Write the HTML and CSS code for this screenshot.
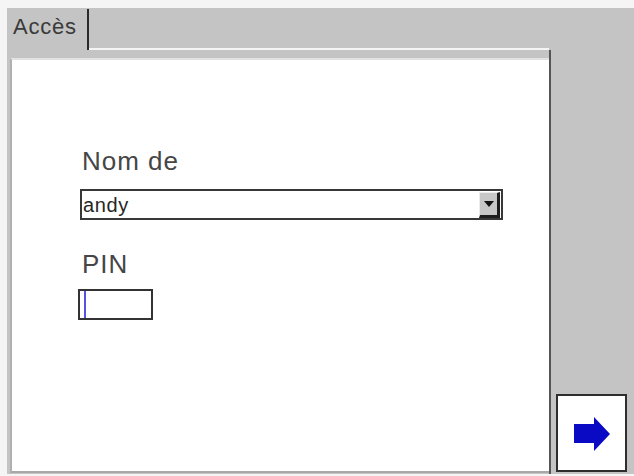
FILE: index.html
```html
<!DOCTYPE html>
<html lang="fr">
<head>
<meta charset="utf-8">
<title>Accès</title>
<link rel="stylesheet" href="styles.css">
</head>
<body>
<div class="screen">
  <div class="tabbar">
    <div class="tab">Accès</div>
    <div class="tabline"></div>
  </div>
  <div class="main">
    <div class="panel">
      <div class="content">
        <div class="label">Nom de</div>
        <div class="combo">
          <span class="combo-text">andy</span>
          <span class="combo-btn"><span class="tri"></span></span>
        </div>
        <div class="label label-pin">PIN</div>
        <div class="pin"><span class="caret"></span></div>
      </div>
    </div>
    <div class="side">
      <div class="next">
        <svg width="36" height="35" viewBox="0 0 36 35" aria-hidden="true">
          <polygon points="0,7 20,7 20,0 36,17 20,34 20,26 0,26" fill="#0a0ac4"/>
        </svg>
      </div>
    </div>
  </div>
</div>
</body>
</html>
```

FILE: styles.css
```css
html, body {
  margin: 0;
  padding: 0;
}
body {
  background: #f5f5f5;
  width: 634px;
  height: 476px;
  overflow: hidden;
  padding: 8px 0 0 7px;
  box-sizing: border-box;
  font-family: "Liberation Sans", Arial, sans-serif;
}
.screen {
  width: 627px;
  height: 466px;
  background: #c4c4c4;
  display: flex;
  flex-direction: column;
}
.tabbar {
  display: flex;
  height: 42px;
}
.tab {
  width: 82px;
  box-sizing: border-box;
  border-right: 2px solid #2a2a2a;
  margin-top: 1px;
  padding: 5px 0 0 6px;
  font-size: 22px;
  line-height: 26px;
  letter-spacing: 0.8px;
  color: #3a3a3a;
}
.tabline {
  width: 460px;
  border-bottom: 2px solid #f4f4f4;
  box-sizing: border-box;
}
.main {
  display: flex;
  flex: 1;
}
.panel {
  width: 544px;
  border-right: 2px solid #555;
  box-sizing: border-box;
  padding: 8px 0 1px 3px;
  display: flex;
}
.content {
  flex: 1;
  background: #ffffff;
  border-top: 2px solid #e2e2e2;
  border-left: 2px solid #b0b0b0;
  border-bottom: 2px solid #a8a8a8;
  display: flex;
  flex-direction: column;
  align-items: flex-start;
  padding-top: 86px;
}
.label {
  font-size: 26px;
  line-height: 30px;
  letter-spacing: 1px;
  color: #464646;
  margin-left: 70px;
}
.label-pin {
  margin-top: 29px;
}
.combo {
  margin-top: 13px;
  margin-left: 68px;
  width: 423px;
  height: 31px;
  box-sizing: border-box;
  border: 2px solid #383838;
  display: flex;
  align-items: center;
  justify-content: space-between;
}
.combo-text {
  font-size: 20px;
  line-height: 25px;
  letter-spacing: 0.6px;
  color: #262626;
  padding-left: 1px;
  padding-top: 1px;
}
.combo-btn {
  width: 21px;
  height: 26px;
  box-sizing: border-box;
  margin-right: 1px;
  background: #c6c6c6;
  border-top: 1px solid #ececec;
  border-left: 1px solid #ececec;
  border-right: 3px solid #1c1c1c;
  border-bottom: 3px solid #1c1c1c;
  display: flex;
  align-items: center;
  justify-content: center;
}
.tri {
  width: 0;
  height: 0;
  border-left: 5px solid transparent;
  border-right: 5px solid transparent;
  border-top: 6px solid #111;
}
.pin {
  margin-top: 10px;
  margin-left: 66px;
  width: 75px;
  height: 31px;
  box-sizing: border-box;
  border: 2px solid #333;
  display: flex;
  align-items: center;
}
.caret {
  width: 2px;
  height: 27px;
  margin-left: 4px;
  background: #5454e0;
}
.side {
  flex: 1;
  display: flex;
  flex-direction: column;
  justify-content: flex-end;
  padding: 0 0 2px 5px;
}
.next {
  width: 71px;
  height: 78px;
  box-sizing: border-box;
  border: 2px solid #2e2e2e;
  background: #ffffff;
  display: flex;
  align-items: center;
  justify-content: center;
  padding-top: 2px;
}
```
